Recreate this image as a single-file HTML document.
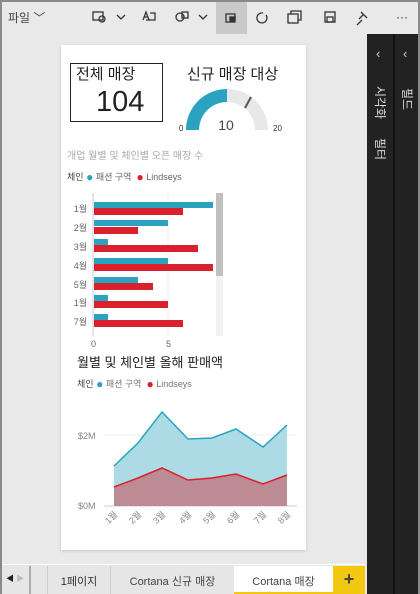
<!DOCTYPE html>
<html><head><meta charset="utf-8"><style>
*{margin:0;padding:0;box-sizing:border-box}
body{width:420px;height:594px;overflow:hidden;background:#e9e9e9;font-family:"Liberation Sans","Noto Sans CJK KR",sans-serif;position:relative}
.a{position:absolute}
.t{color:#333;font-size:14px;white-space:nowrap}
.d{font-size:12px;vertical-align:-1px}
.v{writing-mode:vertical-rl;text-orientation:sideways;color:#ddd;font-size:12px}
</style></head><body>
<div class="a" style="left:0;top:0;width:420px;height:594px;border:2px solid #8a8a8a;border-bottom:none"></div>
<div class="a t" style="left:8px;top:9px;font-size:12px;color:#444">파일 ﹀</div>
<div class="a" style="left:216px;top:2px;width:31px;height:32px;background:#c9c9c9"></div>
<svg class="a" style="left:0;top:0" width="420" height="34" fill="none" stroke="#333" stroke-width="1.3">
<rect x="93" y="12" width="10" height="8"/><circle cx="102" cy="19" r="3"/><path d="M117 15l4 4 4-4"/>
<path d="M143 20l3-8 3 8M144 17h4M150 13h5v7h-9"/>
<circle cx="180" cy="17" r="4"/><rect x="182" y="12" width="6" height="6"/><path d="M199 15l4 4 4-4"/>
<rect x="226" y="14" width="9" height="8"/><rect x="230" y="17" width="5" height="4" fill="#333"/>
<path d="M263 13a5 5 0 1 0 3 2"/>
<rect x="288" y="14" width="10" height="9"/><path d="M291 14v-3h10v9h-3"/>
<rect x="325" y="12" width="10" height="10"/><rect x="327" y="17" width="6" height="5"/>
<path d="M361 12l6 6M359 19l4-4M362 20l-5 5"/>
<text x="396" y="21" fill="#333" stroke="none" font-size="12">···</text>
</svg>
<div class="a" style="left:367px;top:34px;width:26px;height:560px;background:#222"></div>
<div class="a" style="left:393px;top:34px;width:2px;height:560px;background:#111"></div>
<div class="a" style="left:395px;top:34px;width:23px;height:560px;background:#222"></div>
<div class="a" style="left:376px;top:46px;color:#ccc;font-size:13px">‹</div>
<div class="a" style="left:403px;top:46px;color:#ccc;font-size:13px">‹</div>
<div class="a v" style="left:372px;top:86px">시각화</div>
<div class="a v" style="left:372px;top:138px">필터</div>
<div class="a v" style="left:399px;top:88px">필드</div>

<div class="a" style="left:61px;top:45px;width:245px;height:505px;background:#fff;box-shadow:0 1px 3px rgba(0,0,0,.15)"></div>
<div class="a" style="left:70px;top:63px;width:93px;height:59px;border:1px solid #222"></div>
<div class="a t" style="left:76px;top:63px;font-size:15px;color:#222">전체 매장</div>
<div class="a" style="left:96px;top:86px;font-size:29px;color:#222">104</div>
<div class="a t" style="left:187px;top:63px;font-size:15px;color:#222">신규 매장 대상</div>
<svg class="a" style="left:0;top:0" width="420" height="594">
<path d="M186 130A41 41 0 0 1 268 130H255A28 28 0 0 0 199 130Z" fill="#e8e8e8"/>
<path d="M186 130A41 41 0 0 1 227 89V102A28 28 0 0 0 199 130Z" fill="#2ba3c0"/>
<path d="M245 108l6-11" stroke="#555" stroke-width="2"/>
<text x="179" y="131" font-size="8" fill="#333">0</text><text x="273" y="131" font-size="8" fill="#333">20</text>
<text x="226" y="130" font-size="14" fill="#444" text-anchor="middle">10</text>
</svg>
<div class="a t" style="left:67px;top:147px;font-size:10px;color:#aaa">개업 월별 및 체인별 오픈 매장 수</div>
<div class="a t" style="left:67px;top:170px;font-size:9px;color:#444">체인 <span class="d" style="color:#2ba3c0">●</span> <span style="color:#666">패션 구역</span> &nbsp;<span class="d" style="color:#d9202c">●</span> <span style="color:#666">Lindseys</span></div>
<svg class="a" style="left:0;top:0" width="420" height="594" font-family="Liberation Sans,Noto Sans CJK KR,sans-serif">
<line x1="93" y1="193" x2="93" y2="336" stroke="#ccc"/><line x1="168" y1="193" x2="168" y2="336" stroke="#eee"/>
<rect x="216" y="193" width="7" height="143" fill="#f2f2f2"/><rect x="216" y="193" width="7" height="83" fill="#c0c0c0"/>
<g fill="#2ba3c0">
<rect x="94" y="202" width="119" height="6"/><rect x="94" y="220" width="74" height="6"/><rect x="94" y="239" width="14" height="6"/><rect x="94" y="258" width="74" height="6"/><rect x="94" y="277" width="44" height="6"/><rect x="94" y="295" width="14" height="6"/><rect x="94" y="314" width="14" height="6"/></g>
<g fill="#d9202c">
<rect x="94" y="208" width="89" height="7"/><rect x="94" y="227" width="44" height="7"/><rect x="94" y="245" width="104" height="7"/><rect x="94" y="264" width="119" height="7"/><rect x="94" y="283" width="59" height="7"/><rect x="94" y="301" width="74" height="7"/><rect x="94" y="320" width="89" height="7"/></g>
<g font-size="9" fill="#666" text-anchor="end">
<text x="87" y="212">1월</text><text x="87" y="231">2월</text><text x="87" y="250">3월</text><text x="87" y="269">4월</text><text x="87" y="288">5월</text><text x="87" y="306">1월</text><text x="87" y="325">7월</text></g>
<text x="91" y="347" font-size="9" fill="#666">0</text><text x="166" y="347" font-size="9" fill="#666">5</text>
</svg>
<div class="a t" style="left:77px;top:352px;font-size:13px;color:#222">월별 및 체인별 올해 판매액</div>
<div class="a t" style="left:77px;top:377px;font-size:9px;color:#444">체인 <span class="d" style="color:#2ba3c0">●</span> <span style="color:#777">패션 구역</span> &nbsp;<span class="d" style="color:#d9202c">●</span> <span style="color:#777">Lindseys</span></div>
<svg class="a" style="left:0;top:0" width="420" height="594" font-family="Liberation Sans,Noto Sans CJK KR,sans-serif">
<line x1="104" y1="435" x2="297" y2="435" stroke="#eee"/>
<line x1="104" y1="506" x2="297" y2="506" stroke="#ccc"/>
<path d="M114 466L138 443L162 412L188 439L212 438L236 429L263 447L287 425V506H114Z" fill="#acdbe5"/>
<path d="M114 466L138 443L162 412L188 439L212 438L236 429L263 447L287 425" fill="none" stroke="#2ba3c0" stroke-width="1.5"/>
<path d="M114 487L138 478L162 468L188 480L212 478L236 474L263 484L287 475V506H114Z" fill="#bc8b94"/>
<path d="M114 487L138 478L162 468L188 480L212 478L236 474L263 484L287 475" fill="none" stroke="#d9202c" stroke-width="1.5"/>
<g font-size="9" fill="#888"><text x="78" y="439">$2M</text><text x="78" y="509">$0M</text></g>
<g font-size="9" fill="#888" text-anchor="end">
<text transform="translate(118,515) rotate(-45)">1월</text><text transform="translate(142,515) rotate(-45)">2월</text><text transform="translate(166,515) rotate(-45)">3월</text><text transform="translate(192,515) rotate(-45)">4월</text><text transform="translate(216,515) rotate(-45)">5월</text><text transform="translate(240,515) rotate(-45)">6월</text><text transform="translate(267,515) rotate(-45)">7월</text><text transform="translate(291,515) rotate(-45)">8월</text></g>
</svg>
<div class="a" style="left:2px;top:564px;width:363px;height:30px;background:#e6e6e6;border-top:1px solid #fff"></div>
<div class="a" style="left:6px;top:573px;font-size:8px;color:#222">◀ <span style="color:#bbb">▶</span></div>
<div class="a" style="left:29px;top:566px;width:2px;height:28px;background:#aaa"></div>
<div class="a" style="left:47px;top:566px;width:1px;height:28px;background:#ccc"></div>
<div class="a" style="left:110px;top:566px;width:1px;height:28px;background:#ccc"></div>
<div class="a t" style="left:48px;top:573px;width:62px;text-align:center;font-size:11px;color:#333">1페이지</div>
<div class="a t" style="left:111px;top:573px;width:123px;text-align:center;font-size:11px;color:#444">Cortana 신규 매장</div>
<div class="a" style="left:234px;top:566px;width:99px;height:28px;background:#fff;border-bottom:2px solid #f2c811"></div>
<div class="a t" style="left:234px;top:573px;width:99px;text-align:center;font-size:11px;color:#444">Cortana 매장</div>
<div class="a" style="left:333px;top:566px;width:32px;height:28px;background:#f2c811;text-align:center;font-size:18px;font-weight:bold;color:#444;line-height:26px">+</div>
</body></html>
